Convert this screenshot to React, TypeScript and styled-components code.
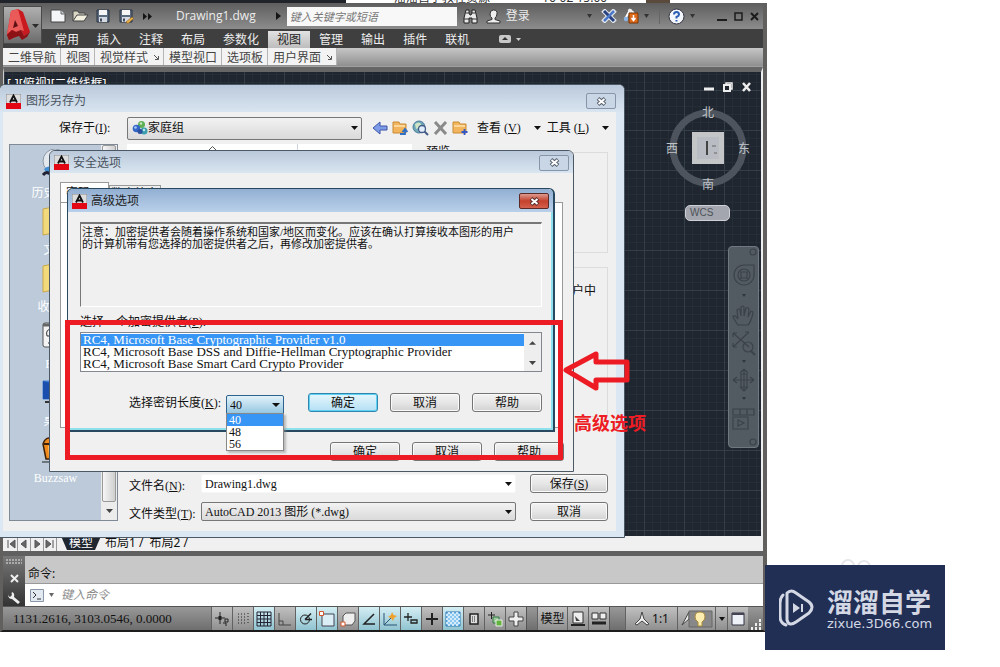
import React from 'react';
import styled, { createGlobalStyle, css } from 'styled-components';

const UI = `"Noto Sans", "Noto Sans CJK SC", sans-serif`;
const SONG = `"Liberation Serif", "Noto Sans CJK SC", serif`;
const RED = '#ed1c24';

const Global = createGlobalStyle`
  * { box-sizing: border-box; }
  body { margin: 0; background: #fff; font: 12px/16px ${UI}; color: #111; }
  button, input, select, textarea { font: inherit; color: inherit; margin: 0; padding: 0; border: 0; border-radius: 0; background: none; }
  ul { margin: 0; padding: 0; list-style: none; }
  svg { display: block; flex: none; }
`;

const Desktop = styled.main`
  position: relative;
  min-height: 100vh;
  overflow: hidden;
`;

/* ---------- application frame ---------- */
const Behind = styled.div`
  display: flex;
  align-items: flex-end;
  height: 3px;
  overflow: hidden;
  margin-right: 233px;
  background: linear-gradient(90deg, #20242a 0 346px, #fff 346px 646px, #5a4a3c 646px 670px, #fff 670px);
  color: #333;
  gap: 52px;
  padding-left: 394px;
  line-height: 10px;
  white-space: nowrap;
`;
const AppWindow = styled.section`
  margin-right: 233px;
  border: solid #62605f;
  border-width: 0 4px 0 3px;
  border-bottom: 2px solid #1d1d1d;
`;
const Header = styled.header`
  display: flex;
  background: linear-gradient(#5e5e5e, #8c8c8c 26px, #3f3f3f 26px);
`;
const LogoButton = styled.button`
  width: 39px;
  height: 38px;
  margin-top: 3px;
  border: 1px solid #4a4a4a;
  background: linear-gradient(#b0b0b0, #6c6c6c);
`;
const HeaderMain = styled.div`
  flex: 1;
  min-width: 0;
`;
const TitleBar = styled.div`
  display: flex;
  align-items: center;
  height: 26px;
  padding: 0 4px 0 8px;
  color: #ececec;
`;
const IconButton = styled.button<{ $gap?: number }>`
  display: flex;
  align-items: center;
  justify-content: center;
  margin-left: ${p => p.$gap ?? 0}px;
`;
const DocTitle = styled.h1`
  margin: 0 20px 0 24px;
  font: 12px/16px "Open Sans", sans-serif;
`;
const Search = styled.input`
  width: 170px;
  height: 19px;
  margin-left: 6px;
  padding: 0 3px;
  background: #f8f8f8;
  font-style: italic;
  font-size: 11px;
  &::placeholder { color: #777; }
`;
const Spacer = styled.div`flex: 1;`;
const Divider = styled.span`
  width: 1px;
  height: 16px;
  margin-left: 10px;
  background: #666;
`;
const MenuBar = styled.nav`
  display: flex;
  align-items: center;
  height: 19px;
  padding-left: 4px;
`;
const MenuItem = styled.button<{ $active?: boolean }>`
  height: 17px;
  padding: 0 9px;
  align-self: flex-end;
  color: #eee;
  ${p => p.$active && css`background: linear-gradient(#e2e2e2, #bdbdbd); color: #222;`}
`;
const PanelBar = styled.div`
  display: flex;
  height: 19px;
  padding-bottom: 1px;
  background: linear-gradient(#c6c6c6, #8f8f8f);
  border-bottom: 1px solid #a0a0a0;
`;
const Panel = styled.button`
  display: flex;
  align-items: center;
  gap: 6px;
  padding: 2px 4px 0 5px;
  border-right: 1px solid #b5b5b5;
  background: #f3f3f3;
  color: #444;
`;
const Canvas = styled.div`
  display: flex;
  justify-content: space-between;
  height: 469px;
  border-top: 5px solid #666;
  border-right: 2px solid #eee;
  border-left: 1px solid #ccc;
  padding: 2px 2px 0 3px;
  background-color: #1f2630;
  background-image:
    linear-gradient(90deg, #343e48 1px, transparent 1px),
    linear-gradient(#343e48 1px, transparent 1px),
    linear-gradient(90deg, #252d37 1px, transparent 1px),
    linear-gradient(#252d37 1px, transparent 1px);
  background-size: 40px 40px, 40px 40px, 8px 8px, 8px 8px;
  background-position: 0 0, 0 18px, 0 0, 0 2px;
`;
const ViewLabel = styled.p`
  margin: 2px 0 0;
  color: #fff;
`;
const CanvasTools = styled.aside`
  display: flex;
  flex-direction: column;
  align-items: flex-end;
  width: 96px;
`;
const DocControls = styled.div`
  display: flex;
  gap: 9px;
  padding: 8px 8px 0;
`;
const Wcs = styled.button`
  display: flex;
  width: 45px;
  height: 16px;
  margin: 11px 29px 25px 0;
  padding: 0 4px;
  border: 1px solid #cfd1d6;
  border-radius: 5px;
  background: #a3a6ae;
  color: #4e5259;
  font: 10px/14px "Liberation Sans", sans-serif;
`;
const NavBar = styled.div`
  width: 31px;
  height: 202px;
  border: 1px solid #6f7880;
  border-radius: 4px;
  background: #535b62;
`;
const SheetTabs = styled.nav`
  display: flex;
  align-items: stretch;
  height: 15px;
  padding-left: 2px;
  background: #f0f0f0;
  line-height: 14px;
`;
const NavArrow = styled.button`
  width: 13px;
  border-right: 1px solid #999;
  display: flex;
  align-items: center;
  justify-content: center;
`;
const SheetTab = styled.button<{ $active?: boolean }>`
  height: 14px;
  padding: 0 2px 0 4px;
  line-height: 14px;
  ${p => p.$active && css`
    padding: 0 8px;
    margin-left: 4px;
    background: #20262f;
    color: #fff;
    clip-path: polygon(0 0, 100% 0, calc(100% - 6px) 100%, 6px 100%);
  `}
`;
const Command = styled.section`
  display: flex;
  border-top: 5px solid #606060;
`;
const CommandGrip = styled.div`
  display: flex;
  flex-direction: column;
  align-items: center;
  justify-content: space-between;
  width: 22px;
  padding: 3px 0 2px;
  background: linear-gradient(#777, #333);
`;
const CommandMain = styled.div`flex: 1;`;
const History = styled.p`
  margin: 0;
  height: 28px;
  padding: 10px 3px 0;
  background: #c8c8c8;
  border-bottom: 1px solid #999;
`;
const CommandRow = styled.label`
  display: flex;
  align-items: center;
  gap: 5px;
  height: 22px;
  padding-left: 5px;
  background: #fff;
  input { flex: 1; margin-left: 2px; font-style: italic; outline: 0; }
  input::placeholder { color: #8b8b8b; }
`;
const StatusBar = styled.footer`
  display: flex;
  height: 24px;
  border-top: 1px solid #555;
  background: linear-gradient(#989898, #6e6e6e);
`;
const Coords = styled.span`
  width: 208px;
  padding: 4px 0 0 10px;
  font: 13px/16px ${SONG};
`;
const StatusButton = styled.button<{ $on?: boolean; $w?: number }>`
  display: flex;
  align-items: center;
  justify-content: center;
  gap: 2px;
  width: ${p => p.$w ?? 21}px;
  border-left: 1px solid #626262;
  background: ${p => (p.$on ? 'linear-gradient(#d5eef4, #8fc3d0)' : 'linear-gradient(#c0c0c0, #8f8f8f)')};
`;
const StatusGap = styled.span<{ $w: number }>`
  width: ${p => p.$w}px;
  border-left: 1px solid #555;
`;

/* ---------- dialogs ---------- */
const Dialog = styled.section<{ $x: number; $y: number; $w: number; $h: number; $active?: boolean }>`
  position: absolute;
  left: ${p => p.$x}px;
  top: ${p => p.$y}px;
  width: ${p => p.$w}px;
  height: ${p => p.$h}px;
  display: flex;
  flex-direction: column;
  overflow: hidden;
  border: 1px solid #4b5866;
  border-radius: 6px 6px 0 0;
  background: #f0f0f0;
  ${p => p.$active && css`
    overflow: visible;
    border-color: #27485e;
    border-width: 1px 2px 2px 1px;
    box-shadow: inset -2px -2px #8fe0ee;
  `}
`;
const DialogTitle = styled.header<{ $active?: boolean; $h: number; $main?: boolean }>`
  display: flex;
  align-items: center;
  flex: none;
  gap: ${p => (p.$main ? 5 : 4)}px;
  height: ${p => p.$h}px;
  padding: ${p => (p.$main ? '5px 8px 0 6px' : '1px 4px 0')};
  border-radius: 5px 5px 0 0;
  background: ${p => (p.$active ? 'linear-gradient(#92afd2, #b9d0ea)' : 'linear-gradient(#bac9db, #d9e5f0)')};
  color: ${p => (p.$active ? '#222' : '#4a545f')};
  h2 { flex: 1; margin: 0; font: inherit; }
`;
const Close = styled.button<{ $danger?: boolean }>`
  display: flex;
  align-items: center;
  justify-content: center;
  width: 30px;
  height: 16px;
  border: 1px solid ${p => (p.$danger ? '#5c2a26' : '#8795a8')};
  border-radius: 2px;
  background: ${p => (p.$danger ? 'linear-gradient(#dd9a8e, #c4412d 50%, #d4604c)' : '#c9d6e5')};
`;
const PushButton = styled.button<{ $default?: boolean; $w?: number }>`
  width: ${p => p.$w ?? 70}px;
  height: 19px;
  border: 1px solid ${p => (p.$default ? '#2f87ad' : '#757575')};
  border-radius: 3px;
  background: ${p => (p.$default ? 'linear-gradient(#e6f6fc, #b4e0f4)' : 'linear-gradient(#f3f3f3, #e6e6e6 50%, #d2d2d2)')};
  box-shadow: inset 0 0 0 1px ${p => (p.$default ? '#5ed1f5' : '#fafafa')};
  font: 12px/16px ${SONG};
`;
const Combo = styled.div<{ $w: number; $plain?: boolean; $hot?: boolean; $h: number }>`
  display: flex;
  align-items: center;
  width: ${p => p.$w}px;
  height: ${p => p.$h}px;
  padding: 0 3px;
  border: 1px solid #777;
  border-radius: 2px;
  background: linear-gradient(#f2f2f2, #dadada);
  font: 12px/16px ${SONG};
  select, input { flex: 1; min-width: 0; appearance: none; outline: 0; }
  ${p => p.$plain && css`background: #fff; border-color: #f6f6f6;`}
  ${p => p.$hot && css`background: linear-gradient(#e2f2fa, #92c5e0); border-color: #2c628b;`}
`;

/* save dialog */
const SaveBody = styled.div`
  flex: 1;
  display: flex;
  flex-direction: column;
  border: solid #dbe7f3;
  border-width: 0 8px 6px 3px;
`;
const LookIn = styled.div`
  display: flex;
  align-items: center;
  height: 32px;
  padding-left: 56px;
  font: 12px/16px ${SONG};
  > label { width: 68px; }
`;
const ToolGroup = styled.div`
  display: flex;
  align-items: center;
  gap: 4px;
  margin: 0 9px 0 10px;
`;
const TextMenu = styled.button`
  display: flex;
  align-items: center;
  gap: 13px;
  margin-right: 6px;
  white-space: nowrap;
`;
const SaveColumns = styled.div`
  flex: 1;
  display: flex;
  padding: 0 8px 10px 6px;
`;
const Places = styled.div`
  display: flex;
  width: 109px;
  border: 1px solid #7f8a96;
  background: #bccad9;
`;
const PlaceList = styled.ul`
  flex: 1;
  padding-top: 4px;
  li {
    display: flex;
    flex-direction: column;
    align-items: center;
    gap: 4px;
    height: 57px;
    color: #fff;
    font: 12px/16px ${SONG};
  }
`;
const PlaceScroll = styled.div`
  display: flex;
  flex-direction: column;
  justify-content: flex-end;
  align-items: center;
  width: 16px;
  gap: 7px;
  padding-bottom: 7px;
  background: #ececec;
  span { flex: 1; width: 14px; border: 1px solid #999; border-radius: 2px; background: linear-gradient(90deg, #f6f6f6, #cfcfcf); }
`;
const SaveMain = styled.div`
  flex: 1;
  display: flex;
  flex-direction: column;
  justify-content: space-between;
  padding-left: 9px;
`;
const Files = styled.div`
  display: flex;
  gap: 13px;
  height: 310px;
`;
const FileList = styled.div`
  display: grid;
  grid-template-columns: 171px 1fr;
  width: 285px;
  height: 100%;
  background: #fff;
  span { display: flex; justify-content: center; height: 22px; border-right: 1px solid #ccd6e0; padding-top: 2px; }
`;
const PreviewColumn = styled.div`
  flex: 1;
  display: flex;
  flex-direction: column;
  gap: 14px;
`;
const Group = styled.fieldset<{ $h: number }>`
  height: ${p => p.$h}px;
  margin: 0;
  padding: 0;
  border: 1px solid #dcdcdc;
  legend { font: 12px/16px ${SONG}; padding: 0; }
  p { margin: 15px 11px; text-align: right; font: 12px/16px ${SONG}; }
`;
const SaveForm = styled.div`
  display: grid;
  grid-template-columns: 72px 1fr 78px;
  grid-auto-rows: 19px;
  align-items: center;
  row-gap: 9px;
  margin: 0 0 0 2px;
  font: 12px/16px ${SONG};
  > button { align-self: start; }
  label { white-space: nowrap; padding-top: 5px; }
`;

/* security dialog */
const TabStrip = styled.div`
  display: flex;
  align-items: flex-end;
  margin: 9px 10px 0;
  height: 20px;
`;
const Tab = styled.button<{ $active?: boolean }>`
  height: ${p => (p.$active ? 20 : 17)}px;
  padding: 0 0 0 ${p => (p.$active ? 5 : 1)}px;
  width: ${p => (p.$active ? 49 : 52)}px;
  border: 1px solid #999;
  border-bottom: 0;
  background: ${p => (p.$active ? '#fff' : '#eee')};
  font: 12px/14px ${SONG};
  text-align: left;
  white-space: nowrap;
`;
const TabPage = styled.div`
  flex: 1;
  margin: 0 10px;
  border: 1px solid #999;
  background: #fff;
`;
const ButtonRow = styled.div`
  display: flex;
  justify-content: flex-end;
  gap: 12px;
  padding: 14px 9px 10px;
`;

/* advanced dialog */
const AdvancedBody = styled.form`
  display: flex;
  flex-direction: column;
  padding: 10px 11px 0 12px;
  > label { margin: 7px 0 2px; font: 12px/16px ${SONG}; }
`;
const Notice = styled.p`
  height: 85px;
  margin: 0;
  padding: 2px 1px;
  border: 1px solid #fff;
  border-top: 2px solid #777;
  border-left-color: #777;
  font: 11px/12px ${SONG};
  white-space: nowrap;
`;
const ListBox = styled.div`
  display: flex;
  height: 40px;
  border: 1px solid #828790;
  background: #fff;
  ul { flex: 1; padding: 1px 0; }
`;
const Option = styled.li<{ $selected?: boolean; $size?: number }>`
  height: 12px;
  padding: 0 2px;
  font: ${p => p.$size ?? 13}px/12px ${SONG};
  white-space: nowrap;
  ${p => p.$selected && css`background: #3796f5; color: #fff;`}
`;
const ScrollTrack = styled.div`
  display: flex;
  flex-direction: column;
  align-items: center;
  justify-content: space-between;
  width: 17px;
  padding: 8px 0 6px;
  background: #eee;
`;
const KeyRow = styled.div`
  display: flex;
  align-items: flex-start;
  margin-top: 21px;
  font: 12px/16px ${SONG};
  > label { width: 97px; margin-left: 49px; padding-top: 2px; white-space: nowrap; }
`;
const KeyPicker = styled.div`
  position: relative;
  padding-top: 2px;
  margin-right: 24px;
`;
const KeyMenu = styled.ul`
  position: absolute;
  top: 20px;
  left: 0;
  width: 58px;
  border: 1px solid #888;
  background: #fff;
  box-shadow: 2px 2px 2px #8888;
`;
const KeyButtons = styled.div`
  flex: 1;
  display: flex;
  justify-content: space-between;
`;

/* ---------- annotations ---------- */
const Highlight = styled.div`
  position: absolute;
  left: 65px;
  top: 320px;
  width: 498px;
  height: 140px;
  border: 5px solid ${RED};
`;
const Arrow = styled.svg`
  position: absolute;
  left: 562px;
  top: 348px;
`;
const Callout = styled.strong`
  position: absolute;
  left: 574px;
  top: 410px;
  color: ${RED};
  font: bold 18px/24px "Noto Sans CJK SC", sans-serif;
`;
const Brand = styled.aside`
  position: absolute;
  left: calc(100% - 235px);
  top: 565px;
  display: flex;
  align-items: center;
  gap: 12px;
  width: 180px;
  height: 85px;
  padding-left: 14px;
  background: #212f55;
  color: #d3d8e4;
  p { margin: 0; font: bold 26px/32px "Noto Sans CJK SC", sans-serif; white-space: nowrap; }
  small { display: block; font: 13px/14px "DejaVu Sans", sans-serif; }
`;
const Rings = styled.svg`
  position: absolute;
  left: calc(100% - 160px);
  top: 558px;
`;

/* ---------- glyphs ---------- */
const Down = ({ w = 7, c = '#111' }: { w?: number; c?: string }) => (
  <svg width={w} height="4" viewBox="0 0 8 4" preserveAspectRatio="none"><path d="M0 0h8L4 4z" fill={c} /></svg>
);
const Up = () => <svg width="7" height="4" viewBox="0 0 8 4"><path d="M0 4h8L4 0z" fill="#444" /></svg>;
const AcadMark = () => (
  <svg width="15" height="15" viewBox="0 0 15 15">
    <rect width="15" height="15" fill="#ddd" stroke="#888" />
    <path d="M0 9h15v6H0z" fill="#e30613" />
    <path d="M4 8.500L7.500 1.500l3.500 7M5.500 6.500h4" stroke="#111" strokeWidth="1.800" fill="none" />
  </svg>
);
const CloseGlyph = ({ light }: { light?: boolean }) => (
  <svg width="11" height="9" viewBox="0 0 11 9">
    <path d="M2 1.500l7 6M9 1.500l-7 6" stroke={light ? '#5b302c' : '#58626f'} strokeWidth="4" />
    <path d="M2.500 2l6 5M8.500 2l-6 5" stroke="#fff" strokeWidth="2" />
  </svg>
);
const Folder = ({ badge }: { badge: 'up' | 'plus' }) => (
  <svg width="16" height="16" viewBox="0 0 16 16">
    <path d="M1 2h6l1 2h6v9H1z" fill="#f2b45c" stroke="#c98b34" />
    <path d="M2 5h11v2H2z" fill="#fbd79b" />
    {badge === 'plus'
      ? <path d="M12.500 9v6M9.500 12h6" stroke="#3557c4" strokeWidth="1.800" />
      : <path d="M8 14h5v-4M10.500 12L13 9l2.500 3" stroke="#2f6fc4" strokeWidth="1.800" fill="none" />}
  </svg>
);
const HomeGroup = () => (
  <svg width="17" height="16" viewBox="-1 0 17 16">
    <circle cx="9.500" cy="4.500" r="3.500" fill="#5faf55" /><circle cx="4.500" cy="8.500" r="3.800" fill="#3466c8" />
    <circle cx="12" cy="11" r="3.500" fill="#3c9dad" /><circle cx="8" cy="11.500" r="2.500" fill="#2c4f9e" />
    <circle cx="3.500" cy="7.500" r="1.300" fill="#a9c6f4" /><circle cx="9" cy="3.500" r="1.200" fill="#c7e9be" />
    <circle cx="12" cy="10" r="1.200" fill="#bfe8ec" />
  </svg>
);
const Disk = ({ pen }: { pen?: boolean }) => (
  <svg width="15" height="15" viewBox="0 0 15 15">
    <path d="M1 1h12v12H1z" fill="#5b6b80" stroke="#2b3442" />
    <path d="M3 1h8v5H3z" fill="#f6f6f6" /><path d="M3 8h8v5H3z" fill="#d5dae2" /><path d="M4 9.500h2v3H4z" fill="#3f4b5d" />
    {pen && <path d="M7 13l6-5 1.500 1.500-5.500 5z" fill="#eeb24a" stroke="#8a5a15" strokeWidth=".6" />}
  </svg>
);

const placeArt: Record<string, React.ReactNode> = {
  history: <><circle cx="15" cy="12" r="12" fill="#e3e8ee" stroke="#8b97a5" /><path d="M15 4v8l6 3" stroke="#556" fill="none" /><path d="M4 20q5-5 9 0l-5 6z" fill="#3f8ed4" /><path d="M3 26q4-5 8 0" stroke="#223" strokeWidth="3" fill="none" /></>,
  folder: <path d="M3 3l10-2v26l-10 2zM13 6h15v22H13z" fill="#f1d97c" stroke="#c9a94a" />,
  ftp: <><rect x="3" y="3" width="26" height="24" rx="2" fill="#f4f4f4" stroke="#555" /><path d="M3 5h26" stroke="#666" strokeWidth="3" /><path d="M12 9q-7 0-5 7h4v8M8 23h6" stroke="#333" fill="none" /></>,
  desktop: <><path d="M3 4h26v18H3z" fill="#2767cd" stroke="#4e86d8" /><path d="M3 4l26 9v9H3z" fill="#1b4fae" /><path d="M5 25h22" stroke="#333" strokeWidth="2" /></>,
  buzz: <><path d="M3 10q2-6 6-6 3-3 7-3 9 0 13 9l-3 15H6z" fill="#f08a1c" stroke="#3b2108" strokeWidth="1.500" /><path d="M4 10h24" stroke="#3b2108" strokeWidth="2" /><path d="M9 12l1 11M15 12v11" stroke="#fbc56b" strokeWidth="2" /><path d="M2 28h28" stroke="#222" /></>,
};
const PLACES: [string, string][] = [
  ['history', '历史记录'], ['folder', '文档'], ['folder', '收藏夹'], ['ftp', 'FTP'], ['desktop', '桌面'], ['buzz', 'Buzzsaw'],
];

const K = '#222';
const STATUS: { name: string; on?: boolean; art: React.ReactNode }[] = [
  { name: '推断约束', art: <><path d="M1 7h10M6 1v12" stroke={K} /><path d="M4.500 5h3v4h-3z" fill={K} /><path d="M11 8h3v3h-3zM9 12h3v3" stroke={K} fill="none" /></> },
  { name: '捕捉模式', art: <path d="M3 3h9M3 6h9M3 9h9M3 12h8M13 2v12" stroke={K} strokeDasharray="1 2" /> },
  { name: '栅格显示', on: true, art: <path d="M1 1h14v14H1zM1 4.500h14M1 8h14M1 11.500h14M4.500 1v14M8 1v14M11.500 1v14" stroke="#223" fill="none" /> },
  { name: '正交模式', art: <path d="M2 2v12h12M2 10h4v4" stroke="#444" fill="none" /> },
  { name: '极轴追踪', on: true, art: <><circle cx="7" cy="8.500" r="4.500" stroke={K} fill="none" /><path d="M7 8.500h7M7 8.500l6-6" stroke={K} strokeWidth="1.500" /></> },
  { name: '对象捕捉', on: true, art: <><path d="M3 3h12v12H3z" fill="#dceef5" stroke="#445" /><path d="M.5.5h4v4h-4z" fill="#fff" stroke="#d3562c" /></> },
  { name: '三维对象捕捉', art: <><path d="M3 5l3-3h9v8l-3 4H3z" fill="#eee" stroke="#555" /><path d="M1 11h4v4H1z" fill="#fff" stroke="#d3562c" /></> },
  { name: '对象捕捉追踪', on: true, art: <path d="M13 3L3 13h11" stroke={K} strokeWidth="1.500" fill="none" /> },
  { name: '动态UCS', on: true, art: <><path d="M2 2v12h13M2 14l8-8" stroke="#2a5577" fill="none" /><path d="M10 1l1.500 3L15 5l-3 2-1 3-2-3-3-1 3-2z" fill="#eea22d" /></> },
  { name: '动态输入', on: true, art: <path d="M1 6h8M5 2v8M8 9h6v3H8z" stroke={K} fill="none" strokeWidth="1.300" /> },
  { name: '显示线宽', art: <path d="M2 8h12M8 2v12" stroke={K} strokeWidth="2" /> },
  { name: '透明度', on: true, art: <><path d="M1 1h14v14H1z" fill="#8cc7ef" stroke="#2f79b5" /><path d="M1 5l4-4M1 9l8-8M1 13l12-12M3 15L15 3M7 15l8-8M11 15l4-4M1 11l4 4M1 7l8 8M1 3l12 12M3 1l12 12M7 1l8 8M11 1l4 4" stroke="#e9f5fd" strokeWidth=".8" /></> },
  { name: '快捷特性', art: <><path d="M4 3h8v10H4z" stroke={K} fill="#ddd" strokeWidth="1.500" /><path d="M6 6h4M6 8h4M6 10h4" stroke={K} strokeDasharray="1 1" /></> },
  { name: '选择循环', art: <><path d="M1 4h7M4.500 1v7" stroke={K} /><path d="M6 6h6v6H6z" fill="#9c9" stroke="#374" /><path d="M9 9h6v6H9z" fill="#62b43d" stroke="#eee" /></> },
  { name: '注释监视器', art: <path d="M6 1h4v5h5v4h-5v5H6v-5H1V6h5z" fill="#eee" stroke="#444" /> },
];

const MENU = ['常用', '插入', '注释', '布局', '参数化', '视图', '管理', '输出', '插件', '联机'];
const PANELS: [string, boolean][] = [['二维导航', false], ['视图', false], ['视觉样式', true], ['模型视口', false], ['选项板', false], ['用户界面', true]];
const PROVIDERS = [
  'RC4, Microsoft Base Cryptographic Provider v1.0',
  'RC4, Microsoft Base DSS and Diffie-Hellman Cryptographic Provider',
  'RC4, Microsoft Base Smart Card Crypto Provider',
];

const AppHeader = () => (
  <>
    <Header>
      <LogoButton aria-label="应用程序菜单">
        <svg width="37" height="36" viewBox="0 0 37 36">
          <path d="M7 4l7-2 5 3 7 20-6 4-3-6-5 2-1 5-6 3-2-5z" fill="#c91a20" />
          <path d="M7 4l7-2 6 22-3-1-5 2-4-2-5 4z" fill="#ea5a58" />
          <path d="M11 13l3 6-5 2z" fill="#5e1013" />
          <path d="M3 28l5-5 4 2 5-2 3 6 6-4-3 5-5 3-3-4-6 2-4 2z" fill="#8c1216" />
          <path d="M28 17h7l-3.500 4z" fill="#2c2c2c" />
        </svg>
      </LogoButton>
      <HeaderMain>
        <TitleBar>
          <IconButton aria-label="新建"><svg width="16" height="14" viewBox="0 0 16 14"><path d="M1 1h10l4 4v8H1z" fill="#f4f6f8" stroke="#444" /><path d="M11 1v4h4" fill="#cdd3da" stroke="#666" /></svg></IconButton>
          <IconButton $gap={6} aria-label="打开"><svg width="17" height="14" viewBox="0 0 17 14"><path d="M1 12V2h5l1 2h6v3" fill="#d9d6c4" stroke="#444" /><path d="M1 12l4-6h11l-4 6z" fill="#f3f0df" stroke="#444" /></svg></IconButton>
          <IconButton $gap={7} aria-label="保存"><Disk /></IconButton>
          <IconButton $gap={8} aria-label="另存为"><Disk pen /></IconButton>
          <IconButton $gap={9} aria-label="更多"><svg width="9" height="7" viewBox="0 0 9 7"><path d="M0 0l4 3.500L0 7zM5 0l4 3.500L5 7z" fill="#151515" /></svg></IconButton>
          <DocTitle>Drawing1.dwg</DocTitle>
          <svg width="5" height="8" viewBox="0 0 5 8"><path d="M0 0l5 4-5 4z" fill="#151515" /></svg>
          <Search aria-label="搜索" placeholder="键入关键字或短语" />
          <IconButton $gap={6} aria-label="查找"><svg width="15" height="15" viewBox="0 0 15 15"><path d="M3 1h3v3l1 2h1l1-2V1h3l2 8v5H9V9H6v5H1V9z" fill="#e8e8e8" stroke="#222" /><path d="M3 4h3M9 4h3M1 10h5M9 10h5" stroke="#333" /></svg></IconButton>
          <IconButton $gap={8} aria-label="用户"><svg width="15" height="15" viewBox="0 0 15 15"><path d="M7.500 1q4 0 3.500 4-.5 3-2 4v1.500l5 1.500v2H1v-2l5-1.500V9Q4 8 4 5q0-4 3.500-4z" fill="#eee" stroke="#333" /></svg></IconButton>
          <IconButton $gap={5}>登录</IconButton>
          <Spacer />
          <Down w={5} c="#333" />
          <IconButton $gap={9} aria-label="交换"><svg width="16" height="14" viewBox="0 0 16 14"><path d="M2 1l12 12M14 1L2 13" stroke="#e2e7ef" strokeWidth="5" /><path d="M3 2l10 10" stroke="#28417f" strokeWidth="3" /><path d="M13 2L3 12" stroke="#4c78c8" strokeWidth="2.500" /></svg></IconButton>
          <IconButton $gap={6} aria-label="更新"><svg width="17" height="16" viewBox="0 0 17 16"><path d="M2 11l5-9 4 3" stroke="#fff" strokeWidth="2" fill="none" /><circle cx="7" cy="3" r="2.200" fill="#eee" /><circle cx="3" cy="11" r="2.200" fill="#8cb5e6" /><path d="M6 5h9v10H6z" fill="#dd6a1a" stroke="#7b3506" /><path d="M10.500 7v5M8.500 10l2 2.500 2-2.500" stroke="#fff" strokeWidth="1.500" fill="none" /></svg></IconButton>
          <IconButton $gap={4} aria-label="更多应用"><Down w={5} c="#333" /></IconButton>
          <Divider />
          <IconButton $gap={8} aria-label="帮助"><svg width="17" height="17" viewBox="0 0 17 17"><circle cx="8.500" cy="8.500" r="7.500" fill="#f3f6fb" stroke="#334" /><path d="M6 6.500Q6 4 8.500 4T11 6.500Q11 8 8.500 9v1.500M8.500 12v1.500" stroke="#2c5fb5" strokeWidth="2" fill="none" /></svg></IconButton>
          <IconButton $gap={5} aria-label="帮助菜单"><Down w={5} c="#333" /></IconButton>
          <IconButton $gap={22} aria-label="最小化"><svg width="10" height="9"><path d="M0 8h10" stroke="#1c1c1c" strokeWidth="2" /></svg></IconButton>
          <IconButton $gap={7} aria-label="最大化"><svg width="9" height="9"><path d="M1 1h7v7H1z" stroke="#1c1c1c" strokeWidth="1.500" fill="none" /></svg></IconButton>
          <IconButton $gap={7} aria-label="关闭"><svg width="9" height="9"><path d="M1 1l7 7M8 1L1 8" stroke="#1c1c1c" strokeWidth="2" /></svg></IconButton>
        </TitleBar>
        <MenuBar>
          {MENU.map(m => <MenuItem key={m} $active={m === '视图'}>{m}</MenuItem>)}
          <IconButton $gap={21} aria-label="最小化功能区"><svg width="22" height="8" viewBox="0 0 22 8"><rect width="12" height="8" rx="2" fill="#c9c9c9" /><path d="M3 5h6L6 2z" fill="#333" /><path d="M17 3h5l-2.500 3z" fill="#ccc" /></svg></IconButton>
        </MenuBar>
      </HeaderMain>
    </Header>
    <PanelBar>
      {PANELS.map(([name, launcher]) => (
        <Panel key={name}>{name}{launcher && <svg width="5" height="5" viewBox="0 0 5 5"><path d="M0 0l4 4M4.500 1v3.500H1" stroke="#555" fill="none" /></svg>}</Panel>
      ))}
    </PanelBar>
  </>
);

const DrawingArea = () => (
  <Canvas>
    <ViewLabel>[-][俯视][二维线框]</ViewLabel>
    <CanvasTools>
      <DocControls>
        <IconButton aria-label="最小化图形"><svg width="10" height="10"><path d="M0 7h10" stroke="#eee" strokeWidth="3" /></svg></IconButton>
        <IconButton aria-label="还原图形"><svg width="10" height="10" viewBox="0 0 10 10"><path d="M3 3V1h6v6H7" stroke="#eee" strokeWidth="1.500" fill="none" /><path d="M1 3h6v6H1z" stroke="#eee" strokeWidth="2" fill="none" /></svg></IconButton>
        <IconButton aria-label="关闭图形"><svg width="9" height="10" viewBox="0 0 9 10"><path d="M1 1l7 8M8 1L1 9" stroke="#eee" strokeWidth="2.500" /></svg></IconButton>
      </DocControls>
      <svg width="96" height="102" viewBox="0 0 96 102" fontFamily="Noto Sans CJK SC" fontSize="12" fill="#bfc3c8" textAnchor="middle">
        <circle cx="45" cy="56" r="35" fill="none" stroke="#4d545d" strokeWidth="7" />
        <path d="M29 40h32v32H29z" fill="#c4c5c7" />
        <path d="M34 45h22v22H34z" fill="#b9bcc3" />
        <path d="M44 49v14" stroke="#444" strokeWidth="2" /><path d="M49 54h4M51 61h3" stroke="#666" />
        <text x="45" y="25">北</text><text x="45" y="97">南</text><text x="9" y="61">西</text><text x="81" y="61">东</text>
      </svg>
      <Wcs>WCS</Wcs>
      <NavBar>
        <svg width="29" height="200" viewBox="0 0 29 200" fill="none" stroke="#3b4249" strokeWidth="1.200">
          <circle cx="24" cy="5" r="3" /><circle cx="24" cy="195" r="3" />
          <path d="M15 18h10v10a10 10 0 1 1-10-10z" /><circle cx="15" cy="28" r="6" /><path d="M12 25h6v6h-6z" />
          <path d="M13 47h4l-2 3zM13 113h4l-2 3zM13 150h4l-2 3z" fill="#30363c" stroke="none" />
          <path d="M9 78q-5-7-5-9 3-1 5 3l-1-9q2-2 3 0l1 6v-9q2-2 3 0v9l2-8q2-1 3 1l-1 8 3-6q2 0 2 2-2 9-5 12z" />
          <path d="M4 86l16 14M20 85L4 100M4 86v4M4 86h4M20 85h-4M4 100v-4M4 100h4" /><circle cx="19" cy="100" r="5" /><path d="M22 104l4 4" strokeWidth="2" />
          <path d="M4 133h21M4 133l4-3M4 133l4 3M25 133l-4-3M25 133l-4 3M15 122v22M15 122l-4 4M15 122l4 4M11 140l4 4 4-4M12 127h6v13h-6z" />
          <path d="M4 162h21v6H4zM11 162v6M18 162v6M4 170h15v12H4zM9 173l6 3-6 3z" />
        </svg>
      </NavBar>
    </CanvasTools>
  </Canvas>
);

const AppFooter = () => (
  <>
    <SheetTabs>
      {['M2 1v8M9 1v8L4 5z', 'M7 1v8L2 5z', 'M3 1v8l5-4z', 'M8 1v8M1 1v8l5-4z'].map(d => (
        <NavArrow key={d} aria-label="翻页"><svg width="10" height="10"><path d={d} stroke="#555" fill="#666" /></svg></NavArrow>
      ))}
      <SheetTab $active>模型</SheetTab>
      <SheetTab>布局1 /</SheetTab>
      <SheetTab>布局2 /</SheetTab>
    </SheetTabs>
    <Command>
      <CommandGrip>
        <svg width="16" height="6"><path d="M0 1h16M0 4h16" stroke="#aaa" strokeWidth="2" strokeDasharray="2 1" /></svg>
        <svg width="9" height="9"><path d="M1 1l7 7M8 1L1 8" stroke="#eee" strokeWidth="2" /></svg>
        <svg width="14" height="13" viewBox="0 0 14 13"><path d="M5 1q-1 2 0 3L3 6Q1 5 1 3q0 5 4 5l6 5 2-2-6-5q1-4-2-5z" fill="#eee" /></svg>
      </CommandGrip>
      <CommandMain>
        <History>命令:</History>
        <CommandRow>
          <svg width="14" height="13" viewBox="0 0 14 13"><path d="M.5.5h13v12H.5z" fill="#e3e9f1" stroke="#8a97a8" /><path d="M3 3l3 3-3 3M7 10h4" stroke="#333" fill="none" /></svg>
          <Down w={5} c="#666" />
          <input placeholder="键入命令" aria-label="命令行" />
        </CommandRow>
      </CommandMain>
    </Command>
    <StatusBar>
      <Coords>1131.2616, 3103.0546, 0.0000</Coords>
      {STATUS.map(s => (
        <StatusButton key={s.name} $on={s.on} aria-label={s.name}><svg width="16" height="16" viewBox="0 0 16 16">{s.art}</svg></StatusButton>
      ))}
      <StatusGap $w={11} />
      <StatusButton $w={30}>模型</StatusButton>
      <StatusButton aria-label="布局"><svg width="16" height="16" viewBox="0 0 16 16"><path d="M3 1h10v11H3z" fill="#eee" stroke="#333" /><path d="M5 5l5 5H6z" fill="#444" /><path d="M1 14h14" stroke={K} strokeWidth="2" /></svg></StatusButton>
      <StatusButton aria-label="快速查看"><svg width="16" height="16" viewBox="0 0 16 16"><path d="M1 2h6v6H1zM9 2h6v6H9z" fill="#eee" stroke="#333" /><path d="M1 12h14" stroke={K} strokeWidth="3" /></svg></StatusButton>
      <StatusGap $w={16} />
      <StatusButton $w={52}>
        <svg width="16" height="16" viewBox="0 0 16 16"><path d="M8 1l2 7 5 5-2 1-5-4-5 4-2-1 5-5z" fill="#eee" stroke="#444" /></svg>1:1
      </StatusButton>
      <StatusButton $w={38} aria-label="注释可见性">
        <svg width="32" height="18" viewBox="0 0 32 18"><path d="M1 15l7-13v7z" fill="#eee" stroke="#444" /><path d="M8 1h23v16H8z" fill="#888" stroke="#666" /><path d="M19 2q5 0 5 5 0 3-3 5v4h-4v-4q-3-2-3-5 0-5 5-5z" fill="#fbeeb0" stroke="#a98c3c" /></svg>
      </StatusButton>
      <StatusButton $w={12} aria-label="菜单"><Down w={6} /></StatusButton>
      <StatusButton aria-label="全屏显示"><svg width="14" height="14"><path d="M1 1h12v12H1z" fill="#eef2f8" stroke="#334" /><path d="M1 2h12" stroke="#445" strokeWidth="2" /></svg></StatusButton>
      <Spacer />
      <svg width="12" height="23"><path d="M9 12v3M5 16v3M9 16v3M1 20v3M5 20v3M9 20v3" stroke="#eee" strokeWidth="2" /></svg>
    </StatusBar>
  </>
);

const SaveDialog = () => (
  <Dialog $x={-1} $y={84} $w={626} $h={454} role="dialog" aria-label="图形另存为">
    <DialogTitle $h={27} $main>
      <AcadMark /><h2>图形另存为</h2><Close aria-label="关闭"><CloseGlyph /></Close>
    </DialogTitle>
    <SaveBody>
      <LookIn>
        <label htmlFor="lookin">保存于(<u>I</u>):</label>
        <Combo $w={235} $h={23}><HomeGroup /><select id="lookin"><option>家庭组</option></select><Down w={7} /></Combo>
        <ToolGroup>
          <IconButton aria-label="返回"><svg width="16" height="14" viewBox="0 0 16 14"><path d="M1 7l7-6v4h7v4H8v4z" fill="#7e9be8" stroke="#3d55a8" /></svg></IconButton>
          <IconButton aria-label="上一级"><Folder badge="up" /></IconButton>
          <IconButton aria-label="搜索 Web"><svg width="17" height="16" viewBox="0 0 17 16"><circle cx="7" cy="7" r="6" fill="#6fa7b8" stroke="#4a7d9a" /><path d="M3 4q4-3 6 0T4 9z" fill="#cfe4c5" /><circle cx="10" cy="9" r="3.500" fill="#dfeefa" stroke="#445a86" strokeWidth="1.300" /><path d="M12.500 11.500l3.500 3.500" stroke="#445a86" strokeWidth="2" /></svg></IconButton>
          <IconButton aria-label="删除"><svg width="15" height="14" viewBox="0 0 15 14"><path d="M2 1l11 12M13 1L2 13" stroke="#8a8a8a" strokeWidth="3" /></svg></IconButton>
          <IconButton aria-label="新建文件夹"><Folder badge="plus" /></IconButton>
        </ToolGroup>
        <TextMenu><span>查看 (<u>V</u>)</span><Down w={7} /></TextMenu>
        <TextMenu><span>工具 (<u>L</u>)</span><Down w={7} /></TextMenu>
      </LookIn>
      <SaveColumns>
        <Places>
          <PlaceList>
            {PLACES.map(([art, name]) => (
              <li key={name}><svg width="32" height="32" viewBox="0 0 32 32">{placeArt[art]}</svg>{name}</li>
            ))}
          </PlaceList>
          <PlaceScroll><span /><Down c="#444" /></PlaceScroll>
        </Places>
        <SaveMain>
          <Files>
            <FileList><span><svg width="7" height="4"><path d="M0 4l3.500-3.500L7 4" stroke="#555" fill="none" /></svg></span></FileList>
            <PreviewColumn>
              <Group $h={109}><legend>预览</legend></Group>
              <Group $h={150}><p>户中</p></Group>
            </PreviewColumn>
          </Files>
          <SaveForm>
            <label htmlFor="fname">文件名(<u>N</u>):</label>
            <Combo $w={315} $h={19} $plain><input id="fname" defaultValue="Drawing1.dwg" /><Down w={7} /></Combo>
            <PushButton $w={78}>保存(<u>S</u>)</PushButton>
            <label htmlFor="ftype">文件类型(<u>T</u>):</label>
            <Combo $w={315} $h={19}><select id="ftype"><option>AutoCAD 2013 图形 (*.dwg)</option></select><Down w={7} /></Combo>
            <PushButton $w={78}>取消</PushButton>
          </SaveForm>
        </SaveMain>
      </SaveColumns>
    </SaveBody>
  </Dialog>
);

const SecurityDialog = () => (
  <Dialog $x={49} $y={150} $w={525} $h={322} role="dialog" aria-label="安全选项">
    <DialogTitle $h={22}>
      <AcadMark /><h2>安全选项</h2><Close aria-label="关闭"><CloseGlyph /></Close>
    </DialogTitle>
    <TabStrip><Tab $active>密码</Tab><Tab>数字签名</Tab></TabStrip>
    <TabPage />
    <ButtonRow><PushButton>确定</PushButton><PushButton>取消</PushButton><PushButton>帮助</PushButton></ButtonRow>
  </Dialog>
);

const AdvancedDialog = () => (
  <Dialog $x={67} $y={188} $w={488} $h={244} $active role="dialog" aria-label="高级选项">
    <DialogTitle $h={23} $active>
      <AcadMark /><h2>高级选项</h2><Close $danger aria-label="关闭"><CloseGlyph light /></Close>
    </DialogTitle>
    <AdvancedBody onSubmit={e => e.preventDefault()}>
      <Notice>
        注意：加密提供者会随着操作系统和国家/地区而变化。应该在确认打算接收本图形的用户<br />
        的计算机带有您选择的加密提供者之后，再修改加密提供者。
      </Notice>
      <label id="providers">选择一个加密提供者(<u>P</u>):</label>
      <ListBox>
        <ul role="listbox" aria-labelledby="providers">
          {PROVIDERS.map((p, i) => <Option key={p} role="option" aria-selected={i === 0} $selected={i === 0}>{p}</Option>)}
        </ul>
        <ScrollTrack><Up /><Down c="#444" /></ScrollTrack>
      </ListBox>
      <KeyRow>
        <label htmlFor="keylen">选择密钥长度(<u>K</u>):</label>
        <KeyPicker>
          <Combo $w={58} $h={20} $hot><select id="keylen" defaultValue="40"><option>40</option><option>48</option><option>56</option></select><Down w={8} /></Combo>
          <KeyMenu role="listbox" aria-label="密钥长度">
            {['40', '48', '56'].map(v => <Option key={v} role="option" aria-selected={v === '40'} $selected={v === '40'} $size={12}>{v}</Option>)}
          </KeyMenu>
        </KeyPicker>
        <KeyButtons><PushButton $default>确定</PushButton><PushButton>取消</PushButton><PushButton>帮助</PushButton></KeyButtons>
      </KeyRow>
    </AdvancedBody>
  </Dialog>
);

export default function App() {
  return (
    <Desktop>
      <Global />
      <Behind><span>溜溜自学教程资源</span><span>16-02 15:00</span></Behind>
      <AppWindow>
        <AppHeader />
        <DrawingArea />
        <AppFooter />
      </AppWindow>
      <SaveDialog />
      <SecurityDialog />
      <AdvancedDialog />
      <Highlight />
      <Arrow width="70" height="46" viewBox="0 0 70 46">
        <path d="M4 22L34 6v8h31v18H34v8z" fill="none" stroke={RED} strokeWidth="5" strokeLinejoin="round" />
      </Arrow>
      <Callout>高级选项</Callout>
      <Rings width="34" height="16" viewBox="0 0 34 16" fill="none" stroke="#e4e6ea" strokeWidth="2"><circle cx="8" cy="8" r="6" /><circle cx="24" cy="9" r="6" /></Rings>
      <Brand>
        <svg width="36" height="38" viewBox="0 0 36 38" fill="none" stroke="#d3d8e4" strokeWidth="3" strokeLinejoin="round">
          <path d="M8 4q4-4 9 0l13 9q6 5 0 11l-13 9q-7 5-9-2z" />
          <path d="M4 6q-3 3-3 8v13q0 7 6 9" strokeLinecap="round" />
          <path d="M14 14l7 5-7 5z" fill="#d3d8e4" stroke="none" /><path d="M23 15v8" strokeWidth="2" />
        </svg>
        <div><p>溜溜自学</p><small>zixue.3D66.com</small></div>
      </Brand>
    </Desktop>
  );
}
